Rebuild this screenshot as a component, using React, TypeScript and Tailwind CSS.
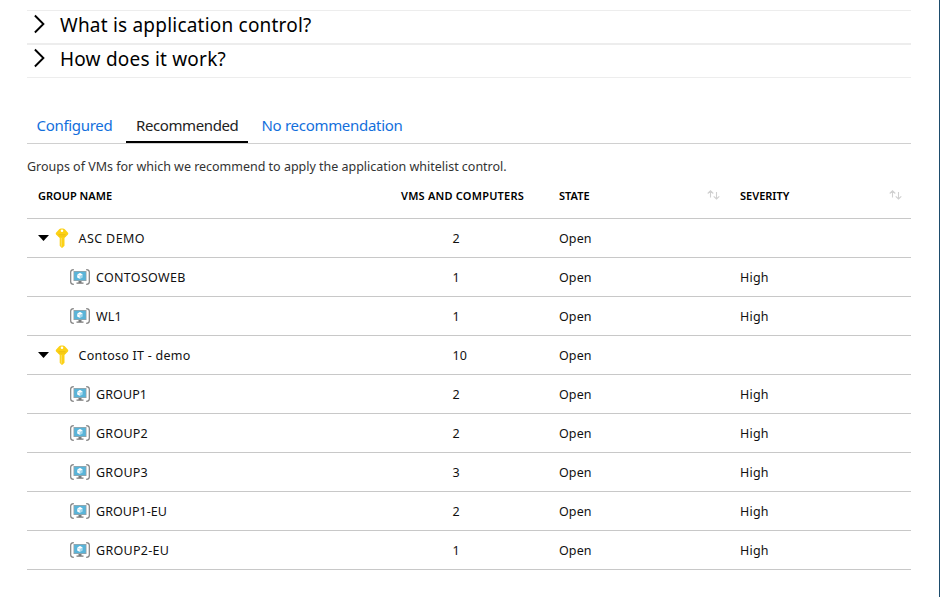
type Row = { name: string; count: number; severity?: string; parent?: boolean; track: string };

const rows: Row[] = [
  { name: 'ASC DEMO', count: 2, parent: true, track: 'tracking-[0.4px]' },
  { name: 'CONTOSOWEB', count: 1, severity: 'High', track: 'tracking-[0.3px]' },
  { name: 'WL1', count: 1, severity: 'High', track: 'tracking-[0.2px]' },
  { name: 'Contoso IT - demo', count: 10, parent: true, track: 'tracking-[0.25px]' },
  { name: 'GROUP1', count: 2, severity: 'High', track: 'tracking-[0.1px]' },
  { name: 'GROUP2', count: 2, severity: 'High', track: 'tracking-[0.25px]' },
  { name: 'GROUP3', count: 3, severity: 'High', track: 'tracking-[0.25px]' },
  { name: 'GROUP1-EU', count: 2, severity: 'High', track: 'tracking-[0.05px]' },
  { name: 'GROUP2-EU', count: 1, severity: 'High', track: 'tracking-[0.3px]' },
];

function Chevron() {
  return (
    <svg width="12" height="20" viewBox="0 0 12 20" fill="none" stroke="#000" strokeWidth="1.9">
      <path d="M.9 1.500 9.400 10 .9 18.500" />
    </svg>
  );
}

function KeyIcon() {
  return (
    <svg width="14" height="20" viewBox="0 0 14 20">
      <path
        fillRule="evenodd"
        fill="#fcd116"
        d="M6 .4h2Q9 .4 9.800 1.300L13 4.800Q13.600 5.500 13 6.400L9.500 10V17.800L7.500 19.700H6.500L4.700 17.800V10L1 6.400Q.4 5.500 1 4.800L4.200 1.300Q5 .4 6 .4ZM7 1.500A1.300 1.300 0 1 0 7 4.100 1.300 1.300 0 0 0 7 1.500Z"
      />
      <path d="M3.500 6.500h7M3.500 8h7" stroke="#e9bc12" strokeWidth=".7" />
      <path d="M6.300 10v8.500" stroke="#fbe37a" strokeWidth=".8" />
    </svg>
  );
}

function MachineIcon() {
  return (
    <svg width="20" height="16" viewBox="0 0 20 16">
      <path d="M3.800.6Q.7.700.7 3v10q0 2.300 3.100 2.400M16.200.6q3.100.1 3.100 2.400v10q0 2.300-3.100 2.400" fill="none" stroke="#808080" strokeWidth="1.200" />
      <path d="M3.500 2h13v10h-13z" fill="#a0a1a2" />
      <path d="M4.200 2.700h11.600v8.600H4.200z" fill="#59b4d9" />
      <path d="M8.500 12h3v1.500h2V14.700h-7v-1.200h2z" fill="#7a7a7a" />
      <path d="m10 4 2.700 1.400v3.100L10 10 7.300 8.500V5.400z" fill="#a5d8ec" />
      <path d="m10 4 2.700 1.400L10 6.700 7.300 5.400zM7.300 6l2.400 1.200v2.600L7.300 8.500z" fill="#fff" />
    </svg>
  );
}

function SortIcon() {
  return (
    <svg width="13" height="10" viewBox="0 0 13 10" fill="none" stroke="#d0d0d0" strokeWidth="1.100">
      <path d="M3.500 7.500V.8M.7 3.500 3.500.8l2.800 2.700M9.500 2v7M6.700 6.300 9.500 9l2.800-2.700" />
    </svg>
  );
}

export default function App() {
  return (
    <div className="h-[597px] w-[940px] overflow-hidden border-r border-[#1d4c6c] bg-white pl-[27px] pr-7 pt-2.5 font-['Noto_Sans','Open_Sans',sans-serif] text-black">
      <section className="border-b border-t border-[#ededed]">
        <div className="flex h-[33px] items-start border-b border-[#ededed] pl-[7px]">
          <div className="mt-[3px]"><Chevron /></div>
          <h2 className="ml-3.5 whitespace-nowrap text-[19px] font-[450] leading-7 tracking-[0.21px]">What is application control?</h2>
        </div>
        <div className="flex h-[33px] items-start border-t border-[#ededed] pl-[7px]">
          <div className="mt-[3px]"><Chevron /></div>
          <h2 className="ml-3.5 whitespace-nowrap text-[19px] font-[450] leading-7 tracking-[0.21px]">How does it work?</h2>
        </div>
      </section>

      <nav className="mt-[30px] flex h-9 border-b border-[#d0d0d0] text-[15px] leading-[34px] text-[#136fdc]">
        <a className="w-[99px] whitespace-nowrap pl-[9.5px] tracking-[-0.3px]">Configured</a>
        <a className="h-[35px] w-[122px] whitespace-nowrap border-b-2 border-black pl-2.5 tracking-[-0.4px] text-[#222]">Recommended</a>
        <a className="whitespace-nowrap pl-[13.5px] tracking-[-0.3px]">No recommendation</a>
      </nav>

      <p className="mt-3 h-[22px] whitespace-nowrap text-[12.5px] leading-[22px] tracking-[-0.015px] text-[#333]">
        Groups of VMs for which we recommend to apply the application whitelist control.
      </p>

      <div className="grid h-[41px] grid-cols-[374px_158px_181px_1fr] border-b border-[#c8c8c8] text-[11px] font-semibold leading-[35px]">
        <div className="pl-[11px]">GROUP NAME</div>
        <div className="tracking-[0.22px]">VMS AND COMPUTERS</div>
        <div className="flex justify-between pr-[20.5px]">STATE<div className="mt-3"><SortIcon /></div></div>
        <div className="flex justify-between pr-[9.5px]">SEVERITY<div className="mt-3"><SortIcon /></div></div>
      </div>

      {rows.map((row) => (
        <div key={row.name} className="grid h-[39px] grid-cols-[374px_158px_181px_1fr] border-b border-[#c8c8c8] text-[12.5px] leading-[39px] text-[#111]">
          {row.parent ? (
            <div className="flex items-center pl-[11px]">
              <svg className="-mt-0.5" width="11" height="6" viewBox="0 0 11 6"><path d="M0 0h11L5.500 6z" /></svg>
              <div className="-mt-0.5 ml-[6px]"><KeyIcon /></div>
              <span className={`ml-[9.5px] whitespace-nowrap ${row.track}`}>{row.name}</span>
            </div>
          ) : (
            <div className="flex items-center pl-[43px]">
              <div className="-mt-0.5"><MachineIcon /></div>
              <span className={`ml-[6px] whitespace-nowrap ${row.track}`}>{row.name}</span>
            </div>
          )}
          <div className="pl-[51.5px]">{row.count}</div>
          <div className="tracking-[0.1px]">Open</div>
          <div className="tracking-[0.2px]">{row.severity}</div>
        </div>
      ))}
    </div>
  );
}
